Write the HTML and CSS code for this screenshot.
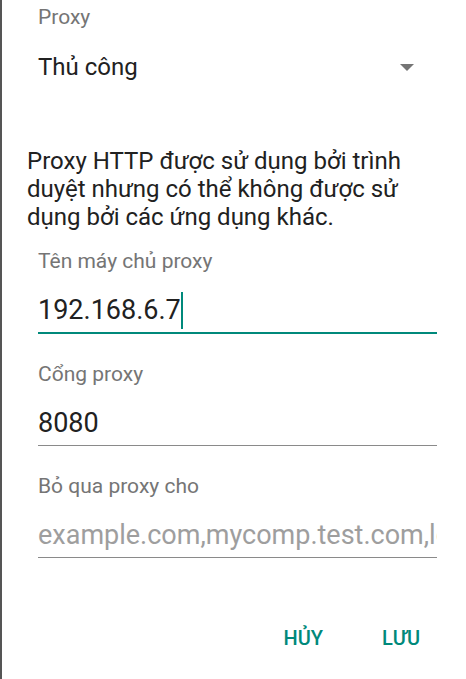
FILE: index.html
```html
<!DOCTYPE html>
<html lang="vi">
<head>
<meta charset="utf-8">
<title>Proxy</title>
<link rel="stylesheet" href="styles.css">
</head>
<body>
<div class="page">
  <div class="select-block">
    <div class="label">Proxy</div>
    <div class="select-row">
      <span class="select-value">Thủ công</span>
      <span class="arrow"></span>
    </div>
  </div>
  <p class="desc">Proxy HTTP được sử dụng bởi trình duyệt nhưng có thể không được sử dụng bởi các ứng dụng khác.</p>
  <div class="fields">
    <div class="field focused">
      <div class="label">Tên máy chủ proxy</div>
      <div class="input"><span class="value">192.168.6.7</span><span class="cursor"></span></div>
    </div>
    <div class="field">
      <div class="label">Cổng proxy</div>
      <div class="input"><span class="value">8080</span></div>
    </div>
    <div class="field">
      <div class="label">Bỏ qua proxy cho</div>
      <div class="input"><span class="value placeholder">example.com,mycomp.test.com,localhost</span></div>
    </div>
  </div>
  <div class="actions">
    <span class="btn">HỦY</span>
    <span class="btn">LƯU</span>
  </div>
</div>
</body>
</html>
```
FILE: styles.css
```css
html, body {
  margin: 0;
  padding: 0;
}
body {
  background: #555555;
  font-family: Roboto, "Noto Sans", sans-serif;
  width: 466px;
  height: 679px;
  overflow: hidden;
}
.page {
  margin-left: 2px;
  background: #ffffff;
  height: 679px;
  padding-top: 5px;
  box-sizing: border-box;
  display: flex;
  flex-direction: column;
}
.label {
  font-size: 21px;
  line-height: 24px;
  height: 24px;
  color: #757575;
  white-space: nowrap;
}
.select-block {
  padding: 0 52px 0 36px;
  display: flex;
  flex-direction: column;
  gap: 22px;
}
.select-row {
  display: flex;
  align-items: center;
  justify-content: space-between;
  height: 32px;
}
.select-value {
  font-size: 24px;
  line-height: 32px;
  color: #212121;
}
.arrow {
  width: 0;
  height: 0;
  border-left: 7px solid transparent;
  border-right: 7px solid transparent;
  border-top: 7px solid #757575;
}
.desc {
  margin: 64px 0 0 0;
  padding: 0 29px 0 25px;
  font-size: 24px;
  line-height: 28px;
  color: #212121;
}
.fields {
  margin-top: 18px;
  padding: 0 29px 0 36px;
  display: flex;
  flex-direction: column;
  gap: 28px;
}
.field {
  display: flex;
  flex-direction: column;
  gap: 19px;
}
.input {
  display: flex;
  align-items: center;
  height: 36px;
  padding-bottom: 4px;
  border-bottom: 1px solid #8a8a8a;
  overflow: hidden;
}
.field.focused .input {
  border-bottom: 2px solid #00897b;
}
.value {
  font-size: 27px;
  line-height: 36px;
  color: #212121;
  white-space: nowrap;
}
.placeholder {
  color: #9e9e9e;
}
.cursor {
  width: 2px;
  height: 37px;
  margin-left: 0;
  background: #00897b;
  flex: none;
}
.actions {
  margin-top: 68px;
  display: flex;
  justify-content: flex-end;
  gap: 59px;
  padding-right: 46px;
}
.btn {
  font-size: 20px;
  line-height: 24px;
  font-weight: 500;
  color: #00897b;
}
```
